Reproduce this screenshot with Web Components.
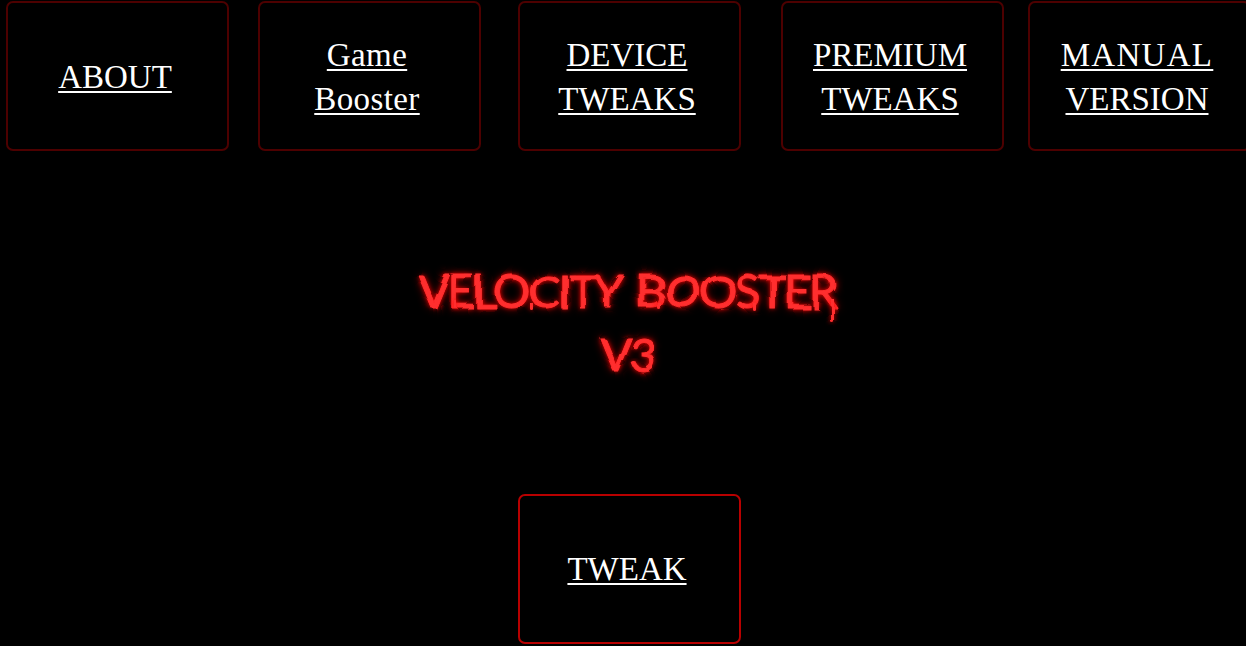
<!DOCTYPE html>
<html lang="en">
<head>
<meta charset="utf-8">
<title>Velocity Booster</title>
<style>
  html, body { margin: 0; background: #000; overflow: hidden; }
</style>
</head>
<body>
<vb-page>
  <vb-nav>
    <vb-tile tone="dim"><a href="#">ABOUT</a></vb-tile>
    <vb-tile tone="dim" style="margin-left:29px"><a href="#" style="letter-spacing:.4px">Game Booster</a></vb-tile>
    <vb-tile tone="dim" style="margin-left:37px"><a href="#">DEVICE TWEAKS</a></vb-tile>
    <vb-tile tone="dim" style="margin-left:40px"><a href="#">PREMIUM TWEAKS</a></vb-tile>
    <vb-tile tone="dim" style="margin-left:24px"><a href="#"><span style="letter-spacing:1.3px">MANUAL</span> VERSION</a></vb-tile>
  </vb-nav>
  <vb-title>VELOCITY BOOSTER<br>V3</vb-title>
  <vb-tile tone="bright" style="margin-left:518px"><a href="#">TWEAK</a></vb-tile>
</vb-page>

<script>
customElements.define('vb-page', class VbPage extends HTMLElement {
  constructor() {
    super();
    this.attachShadow({mode: 'open'});
    this.shadowRoot.innerHTML = `
    <style>
      :host {
        display: flex;
        flex-direction: column;
        width: 1246px;
        height: 646px;
        overflow: hidden;
        box-sizing: border-box;
        padding-top: 1px;
        background: #000;
        color: #fff;
      }
    </style>
    <slot></slot>
    `;
  }
});

customElements.define('vb-nav', class VbNav extends HTMLElement {
  constructor() {
    super();
    this.attachShadow({mode: 'open'});
    this.shadowRoot.innerHTML = `
    <style>
      :host {
        display: flex;
        flex: none;
        padding-left: 6px;
      }
    </style>
    <slot></slot>
    `;
  }
});

customElements.define('vb-tile', class VbTile extends HTMLElement {
  constructor() {
    super();
    this.attachShadow({mode: 'open'});
    this.shadowRoot.innerHTML = `
    <style>
      :host {
        display: flex;
        flex: none;
        align-items: center;
        justify-content: center;
        box-sizing: border-box;
        width: 223px;
        height: 150px;
        padding: 2px 32px 0 27px;
        border: 2px solid #4d0000;
        border-radius: 7px;
        font: 33px/44px "Liberation Serif", "Times New Roman", serif;
        text-align: center;
      }
      :host([tone="bright"]) {
        padding-top: 0;
        border-color: #b80000;
      }
      ::slotted(a) {
        color: #fff;
        text-decoration: underline;
        text-decoration-thickness: 2px;
        text-underline-offset: 3px;
      }
    </style>
    <slot></slot>
    `;
  }
});

customElements.define('vb-title', class VbTitle extends HTMLElement {
  constructor() {
    super();
    this.attachShadow({mode: 'open'});
    this.shadowRoot.innerHTML = `
    <style>
      :host {
        display: block;
        flex: none;
        box-sizing: border-box;
        width: 1254px;
        height: 343px;
        padding-top: 108px;
        text-align: center;
      }
      .txt {
        position: relative;
        display: inline-block;
        font: 400 47px/63px Lato, "Liberation Sans", sans-serif;
        letter-spacing: -2.2px;
        word-spacing: 7px;
        color: #ff2e2e;
        -webkit-text-stroke: .9px #ff2e2e;
        text-shadow: 0 0 4px #f00, 0 0 9px #c00000;
        filter: url(#rough);
      }
      i {
        position: absolute;
        width: 3px;
        border-radius: 0 0 2px 2px;
        background: #ff2e2e;
        box-shadow: 0 0 5px #f00;
      }
    </style>
    <svg width="0" height="0" style="position:absolute">
      <filter id="rough" x="-5%" y="-10%" width="110%" height="120%">
        <feTurbulence type="fractalNoise" baseFrequency="0.03" numOctaves="2" seed="7"/>
        <feDisplacementMap in="SourceGraphic" scale="8"/>
      </filter>
    </svg>
    <div class="txt"><slot></slot>
      <i style="right:2px;top:40px;height:24px"></i>
      <i style="left:36px;top:42px;height:7px"></i>
      <i style="left:112px;top:44px;height:7px"></i>
      <i style="left:240px;top:44px;height:7px"></i>
      <i style="left:335px;top:44px;height:8px"></i>
    </div>
    `;
  }
});
</script>
</body>
</html>
